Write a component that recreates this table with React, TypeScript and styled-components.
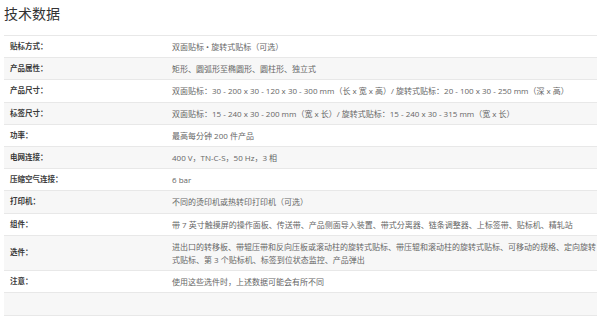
import styled, { createGlobalStyle } from 'styled-components'

// data
const specs: [string, string][] = [
  ['贴标方式：', '双面贴标 • 旋转式贴标（可选）'],
  ['产品属性：', '矩形、圆弧形至椭圆形、圆柱形、独立式'],
  [
    '产品尺寸：',
    '双面贴标：30 - 200 x 30 - 120 x 30 - 300 mm（长 x 宽 x 高）/ 旋转式贴标：20 - 100 x 30 - 250 mm（深 x 高）',
  ],
  [
    '标签尺寸：',
    '双面贴标：15 - 240 x 30 - 200 mm（宽 x 长）/ 旋转式贴标：15 - 240 x 30 - 315 mm（宽 x 长）',
  ],
  ['功率：', '最高每分钟 200 件产品'],
  ['电网连接：', '400 V，TN-C-S，50 Hz，3 相'],
  ['压缩空气连接：', '6 bar'],
  ['打印机：', '不同的烫印机或热转印打印机（可选）'],
  [
    '组件：',
    '带 7 英寸触摸屏的操作面板、传送带、产品侧面导入装置、带式分离器、链条调整器、上标签带、贴标机、精轧站',
  ],
  [
    '选件：',
    '进出口的转移板、带辊压带和反向压板或滚动柱的旋转式贴标、带压辊和滚动柱的旋转式贴标、可移动的规格、定向旋转式贴标、第 3 个贴标机、标签到位状态监控、产品弹出',
  ],
  ['注意：', '使用这些选件时，上述数据可能会有所不同'],
  ['', ''],
]

// styled
const GlobalStyle = createGlobalStyle`
  body {
    margin: 0;
    background: #fff;
    font-family: "Open Sans", "Noto Sans CJK SC", sans-serif;
  }
`

const Page = styled.div`
  padding: 3px 3px 0 4px;
`

const Title = styled.h2`
  margin: 0 0 11px;
  font-size: 14px;
  line-height: 21px;
  font-weight: 400;
  color: #333;
`

const SpecTable = styled.table`
  width: 100%;
  border-collapse: collapse;
  table-layout: fixed;
`

const Row = styled.tr`
  border-top: 1px solid #e8e8e8;
  &:nth-child(even) {
    background: #f7f7f7;
  }
  &:last-child {
    border-bottom: 1px solid #e8e8e8;
  }
`

const Label = styled.td`
  width: 168px;
  padding: 4px 0 4px 6px;
  box-sizing: border-box;
  vertical-align: middle;
  font-size: 7.5px;
  line-height: 13.2px;
  font-weight: 700;
  color: #3a3a3a;
`

const Value = styled.td`
  padding: 4px 0;
  vertical-align: middle;
  font-size: 8px;
  line-height: 13.2px;
  color: #666;
`

// component
const App = () => {
  return (
    <>
      <GlobalStyle />
      <Page>
        <Title>技术数据</Title>
        <SpecTable>
          <tbody>
            {specs.map(([label, value], i) => (
              <Row key={i}>
                <Label>{label || '\u00a0'}</Label>
                <Value>{value || '\u00a0'}</Value>
              </Row>
            ))}
          </tbody>
        </SpecTable>
      </Page>
    </>
  )
}

export default App
